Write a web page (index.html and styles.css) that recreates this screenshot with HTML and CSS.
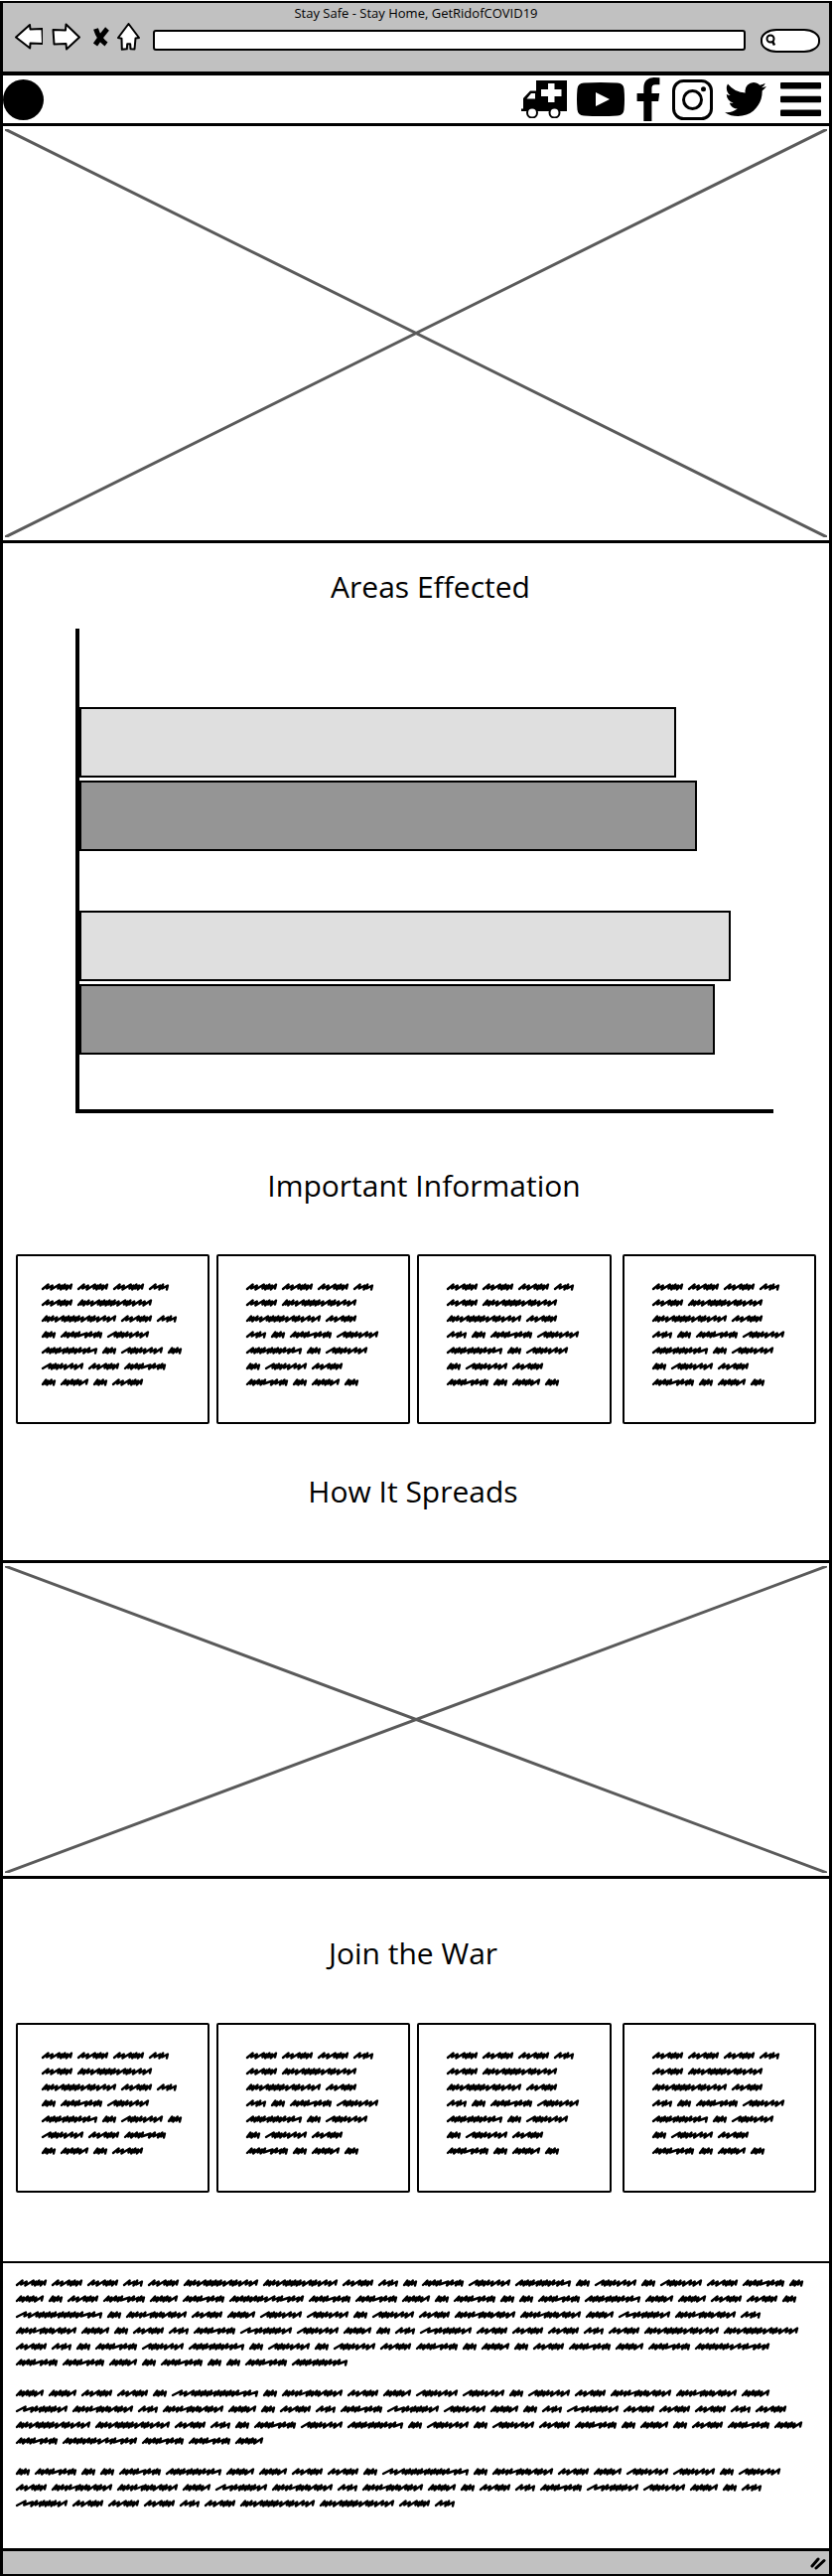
FILE: index.html
```html
<!DOCTYPE html>
<html lang="en">
<head>
<meta charset="utf-8">
<meta name="viewport" content="width=device-width, initial-scale=1">
<title>Stay Safe - Stay Home, GetRidofCOVID19</title>
<link rel="stylesheet" href="styles.css">
</head>
<body>
<div class="browser">
  <header class="chrome">
    <p class="chrome-title">Stay Safe - Stay Home, GetRidofCOVID19</p>
    <div class="toolbar">
      <button class="tool" type="button" aria-label="Back">
        <svg class="tool-icon" width="28" height="28" viewBox="0 0 28 28"><path d="M1 14.500 15 2l.5 4.500 12-.5.500 15-12.500-.5-.3 5z"/></svg>
      </button>
      <button class="tool tool--forward" type="button" aria-label="Forward">
        <svg class="tool-icon" width="29" height="28" viewBox="0 0 29 28"><path d="M1.500 7 14 7.500 14.500 1.500 28 14.500 15 26.500l-.5-5.500-12 .5z"/></svg>
      </button>
      <button class="tool tool--stop" type="button" aria-label="Stop">
        <svg width="18" height="22" viewBox="0 0 18 22"><path d="M3.500 3q3 10 10.500 15.500M15 3q-6 7-12 16" fill="none" stroke="#000" stroke-width="5"/></svg>
      </button>
      <button class="tool tool--home" type="button" aria-label="Home">
        <svg class="tool-icon" width="23" height="28" viewBox="0 0 23 28"><path d="M11.500 1 22 15l-3.500.5-1 11-4-.2-.3-5h-3l-.4 5-5 .5-.3-11L1 15z"/></svg>
      </button>
      <input class="url" type="text" aria-label="Address">
      <label class="search">
        <svg width="11" height="13" viewBox="0 0 11 13"><circle cx="5" cy="5" r="3.500" fill="none" stroke="#000" stroke-width="2"/><path d="M7 7.500 9 11.500" stroke="#000" stroke-width="2.500"/></svg>
        <input class="search-input" type="text" aria-label="Search">
      </label>
    </div>
  </header>

  <nav class="nav" aria-label="Main">
    <a class="logo" href="#" aria-label="Home page"></a>
    <div class="nav-links">
      <a class="nav-ambulance" href="#" aria-label="Ambulance">
        <svg width="46" height="38" viewBox="0 0 46 38">
          <path fill-rule="evenodd" d="M15 0h31v31H0v-2.500h2V18L9 10.500h6zM5.500 18.500h8.500v-5.500H10zM27 3v6h-7v7h7v6h6.500v-6h7V9h-7V3z"/>
          <circle cx="11" cy="32.500" r="5" fill="#fff" stroke="#000" stroke-width="2"/>
          <circle cx="33.500" cy="32.500" r="5" fill="#fff" stroke="#000" stroke-width="2"/>
        </svg>
      </a>
      <a href="#" aria-label="YouTube">
        <svg width="48" height="34" viewBox="0 0 48 34"><path fill-rule="evenodd" d="M7 .6Q24-.6 41 .6q6 .4 6.500 6 1 10.400 0 20.800-.5 5.600-6.500 6-17 1.200-34 0-6-.4-6.500-6-1-10.400 0-20.800Q1 1 7 .6zM19 10v14l14-7z"/></svg>
      </a>
      <a href="#" aria-label="Facebook">
        <svg width="24" height="44" viewBox="479 0 864 1664"><path d="M1343 12v264h-157q-86 0-116 36t-30 108v189h293l-39 296h-254v759h-306v-759h-255v-296h255v-218q0-186 104-288.500t277-102.500q147 0 228 12z"/></svg>
      </a>
      <a href="#" aria-label="Instagram">
        <svg width="41" height="41" viewBox="0 0 41 41"><g fill="none" stroke="#000"><rect x="1.500" y="1.500" width="38" height="38" rx="10" stroke-width="3"/><circle cx="20.500" cy="20.500" r="9" stroke-width="3"/></g><circle cx="31.500" cy="9.700" r="2.500"/></svg>
      </a>
      <a href="#" aria-label="Twitter">
        <svg width="42" height="34" viewBox="108 256 1576 1280"><path d="M1684 408q-67 98-162 167 1 14 1 42 0 130-38 259.500t-115.500 248.500-184.500 210.500-258 146-323 54.500q-271 0-496-145 35 4 78 4 225 0 401-138-105-2-188-64.500t-114-159.500q33 5 61 5 43 0 85-11-112-23-185.500-111.500t-73.500-205.500v-4q68 38 146 41-66-44-105-115t-39-154q0-88 44-163 121 149 294.500 238.500t371.500 99.500q-8-38-8-74 0-134 94.500-228.500t228.500-94.500q140 0 236 102 109-21 205-78-37 115-142 178 93-10 186-50z"/></svg>
      </a>
      <button class="tool tool--menu" type="button" aria-label="Menu">
        <svg width="41" height="34" viewBox="0 0 41 34"><rect width="41" height="6.500" rx="1"/><rect y="13.700" width="41" height="6.500" rx="1"/><rect y="27.400" width="41" height="6.500" rx="1"/></svg>
      </button>
    </div>
  </nav>

  <main>
    <div class="image image--hero" role="img" aria-label="Image placeholder">
      <svg class="cross" viewBox="0 0 100 100" preserveAspectRatio="none"><path d="M0 0 100 100M100 0 0 100"/></svg>
    </div>

    <section class="areas">
      <h2 class="heading heading--areas">Areas Effected</h2>
      <div class="chart" role="img" aria-label="Bar chart of areas effected">
        <div class="bar-group">
          <div class="bar bar--light" style="width: 86%"></div>
          <div class="bar bar--dark" style="width: 89%"></div>
        </div>
        <div class="bar-group">
          <div class="bar bar--light" style="width: 93.8%"></div>
          <div class="bar bar--dark" style="width: 91.6%"></div>
        </div>
      </div>
    </section>

    <section class="info">
      <h2 class="heading heading--info">Important Information</h2>
      <div class="cards">
        <article class="card"><p class="scribble" data-words="AAABAIIABCEFGCFCFAECDCA"></p></article>
        <article class="card"><p class="scribble" data-words="AAABAIIABCEFGCFCFAECDC"></p></article>
        <article class="card"><p class="scribble" data-words="AAABAIIABCEFGCFCFAECDC"></p></article>
        <article class="card"><p class="scribble" data-words="AAABAIIABCEFGCFCFAECDC"></p></article>
      </div>
    </section>

    <section class="spreads">
      <h2 class="heading heading--low">How It Spreads</h2>
      <div class="image image--spreads" role="img" aria-label="Image placeholder">
        <svg class="cross" viewBox="0 0 100 100" preserveAspectRatio="none"><path d="M0 0 100 100M100 0 0 100"/></svg>
      </div>
    </section>

    <section class="join">
      <h2 class="heading heading--low">Join the War</h2>
      <div class="cards">
        <article class="card"><p class="scribble" data-words="AAABAIIABCEFGCFCFAECDCA"></p></article>
        <article class="card"><p class="scribble" data-words="AAABAIIABCEFGCFCFAECDC"></p></article>
        <article class="card"><p class="scribble" data-words="AAABAIIABCEFGCFCFAECDC"></p></article>
        <article class="card"><p class="scribble" data-words="AAABAIIABCEFGCFCFAECDC"></p></article>
      </div>
    </section>
  </main>

  <footer class="footer">
    <p class="scribble" data-words="AAABAIIABCEFGCFCFAECDCAEDEMEEDCECCEGDDAACJCKADFFCFAKKDLKBKDCABELFDCBLAAABAIIABCEFGCFCFAECDCAEDEMEEDCECCEG"></p>
    <p class="scribble" data-words="DDAACJCKADFFCFAKKDLKBKDCABELFDCBLAAABAIIABCEFGCFCFAECDCAEDEMEED"></p>
    <p class="scribble" data-words="CECCEGDDAACJCKADFFCFAKKDLKBKDCABELFDCBLAAABAIIAB"></p>
  </footer>
  <div class="status">
    <svg width="16" height="14" viewBox="0 0 16 14"><path d="M2 10 8 3M6 12l8-7.500" stroke="#000" stroke-width="3" stroke-linecap="round"/></svg>
  </div>
</div>
<script src="scribble.js"></script>
</body>
</html>
```

FILE: styles.css
```css
* {
  box-sizing: border-box;
}

body {
  margin: 0;
  background: #fff;
  color: #000;
  font-family: "Open Sans", "Noto Sans", sans-serif;
}

.browser {
  margin: 1px 1px 1px 0;
  border: solid #000;
  border-width: 2px 3px;
}

.chrome {
  height: 73px;
  border-bottom: 4px solid #000;
  background: #c1c1c1;
}

.chrome-title {
  margin: 0;
  font-size: 13px;
  line-height: 20px;
  text-align: center;
}

.toolbar {
  display: flex;
  align-items: center;
  height: 28px;
  padding: 0 9px 0 12px;
}

.tool {
  display: block;
  padding: 0;
  border: 0;
  background: none;
}

.tool svg,
.nav-links svg {
  display: block;
}

.tool-icon {
  fill: #fff;
  stroke: #000;
  stroke-width: 2;
  stroke-linejoin: round;
}

.tool--forward {
  margin-left: 9px;
}

.tool--stop {
  margin-left: 12px;
}

.tool--home {
  margin: 0 13px 0 7px;
}

.tool--menu {
  margin-left: 2px;
}

.url {
  flex: 1;
  min-width: 0;
  height: 21px;
  margin-top: 6px;
  padding: 0 4px;
  border: 2px solid #000;
  border-radius: 3px;
  background: #fff;
  font: inherit;
  font-size: 13px;
}

.search {
  display: flex;
  align-items: center;
  width: 60px;
  height: 24px;
  margin: 7px 0 0 15px;
  padding-left: 3px;
  border: 2px solid #000;
  border-radius: 16px / 11px;
  background: #fff;
}

.search-input {
  width: 32px;
  padding: 0;
  border: 0;
  background: none;
}

.nav {
  display: flex;
  align-items: center;
  justify-content: space-between;
  height: 51px;
  padding: 0 8px 0 0;
  border-bottom: 3px solid #000;
}

.logo {
  width: 41px;
  height: 41px;
  border-radius: 50%;
  background: #000;
}

.nav-links {
  display: flex;
  align-items: center;
  gap: 12px;
}

.nav-ambulance {
  margin-right: -2px;
}

.image {
  padding: 3px 2px;
  border-bottom: 3px solid #000;
}

.image--hero {
  aspect-ratio: 832 / 420;
}

.image--spreads {
  aspect-ratio: 832 / 321;
  border-top: 3px solid #000;
}

.cross {
  display: block;
  width: 100%;
  height: 100%;
  fill: none;
  stroke: #5a5a5a;
  stroke-width: 3;
}

.cross path {
  vector-effect: non-scaling-stroke;
}

.heading {
  margin: 0;
  font-size: 30px;
  font-weight: 400;
  line-height: 40px;
  text-align: center;
}

.heading--areas {
  padding-left: 12px;
}

.heading--info {
  padding-left: 16px;
}

.heading--low {
  padding-right: 6px;
}

.areas {
  padding: 24px 56px 0 73px;
}

.areas .heading {
  margin-bottom: 22px;
}

.chart {
  display: flex;
  flex-direction: column;
  gap: 60px;
  padding: 79px 0 55px;
  border: solid #000;
  border-width: 0 0 4px 4px;
}

.bar-group {
  display: flex;
  flex-direction: column;
  gap: 3px;
}

.bar {
  height: 71px;
  border: 2px solid #000;
}

.bar--light {
  background: #dfdfdf;
}

.bar--dark {
  background: #959595;
}

.info {
  padding-top: 53px;
}

.cards {
  display: flex;
  gap: 7px;
  padding: 49px 13px 0;
}

.card {
  flex: 1 1 25%;
  min-width: 0;
  height: 171px;
  padding: 23px 29px 0 28px;
  border: 2px solid #000;
  border-radius: 2px;
}

.card:first-child {
  padding: 23px 25px 0 24px;
}

.card:last-child {
  margin-left: 4px;
}

.spreads {
  padding-top: 48px;
}

.spreads .heading {
  margin-bottom: 49px;
}

.join {
  padding: 55px 0 69px;
}

.join .cards {
  padding-top: 50px;
}

.scribble {
  display: flex;
  flex-wrap: wrap;
  gap: 0 5px;
  margin: 0;
}

.scribble-word {
  display: block;
  overflow: visible;
  fill: none;
  stroke: #000;
  stroke-width: 2.4;
  stroke-linecap: round;
  stroke-linejoin: round;
}

.footer {
  display: flex;
  flex-direction: column;
  gap: 15px;
  padding: 12px 17px 37px 13px;
  border: solid #000;
  border-width: 2px 0 3px;
}

.status {
  display: flex;
  align-items: center;
  justify-content: flex-end;
  height: 23px;
  padding-right: 3px;
  background: #c1c1c1;
}
```

FILE: scribble.js
```js
// Placeholder words: a pen pattern and a width for each kind.
// i = open stroke, r = long open stroke, m = tight, dark stroke
const kinds = {
  A: { width: 31, pen: "iirmmmi" },
  B: { width: 20, pen: "rrir" },
  C: { width: 14, pen: "mmii" },
  D: { width: 28, pen: "mmimmmr" },
  E: { width: 42, pen: "mmimmriimm" },
  F: { width: 42, pen: "rmmmiirir" },
  G: { width: 56, pen: "immmmimmmmiiir" },
  I: { width: 75, pen: "mmiirmmmmmmirmmirir" },
  J: { width: 87, pen: "rirmmmmmmimmmmmmirir" },
  K: { width: 61, pen: "mmiiirmmimrmmir" },
  L: { width: 52, pen: "rriimmmmmir" },
  M: { width: 75, pen: "mmimmmimmirimriii" }
};
const strokes = {
  i: { step: 3, up: 4, rise: 4 },
  r: { step: 5, up: 6, rise: 4 },
  m: { step: 2, up: 3, rise: 4 }
};

function wordPath({ width, pen }) {
  const total = [...pen].reduce((sum, s) => sum + strokes[s].step, 0);
  const scale = (width - 3) / total;
  let x = 1;
  let d = "M1 10";
  [...pen].forEach((s, i) => {
    const { step, up, rise } = strokes[s];
    const base = i % 2 ? 10.5 : 9.5;
    d += `L${Math.min(x + up * scale, width - 1)} ${base - rise}`;
    x += step * scale;
    d += `L${x} ${base}`;
  });
  return d;
}

document.querySelectorAll(".scribble").forEach((block) => {
  block.innerHTML = [...block.dataset.words].map((key) => {
    const kind = kinds[key];
    return `<svg class="scribble-word" aria-hidden="true" width="${kind.width}" height="16" viewBox="0 0 ${kind.width} 16"><path d="${wordPath(kind)}"/></svg>`;
  }).join("");
});
```
